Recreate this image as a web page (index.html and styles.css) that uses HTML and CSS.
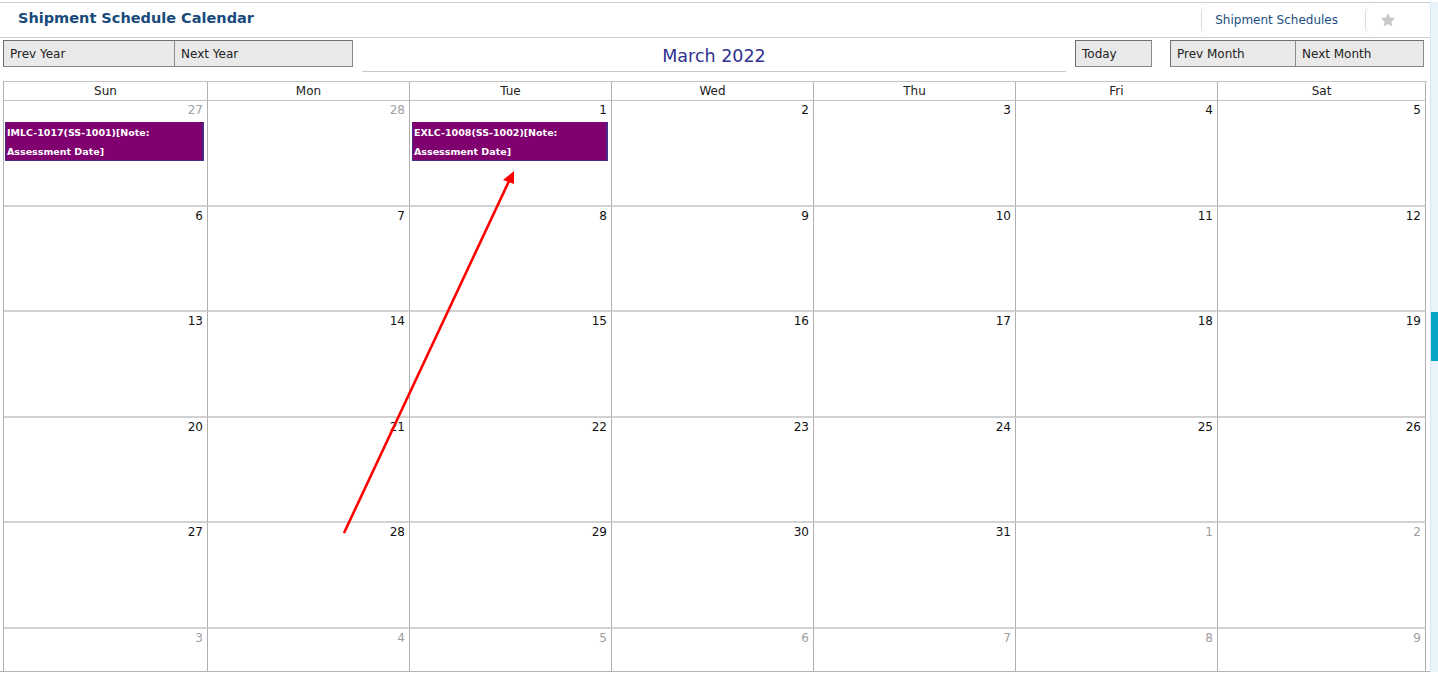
FILE: index.html
```html
<!DOCTYPE html>
<html lang="en">

<head>
    <meta charset="UTF-8">
    <title>Shipment Schedule Calendar</title>
    <link rel="stylesheet" href="styles.css">
</head>

<body>
    <div class="page">
        <div class="panel">

            <!-- Header -->
            <header class="header">
                <div class="header-title">Shipment Schedule Calendar</div>
                <div class="header-tabs">
                    <a class="tab-link">Shipment Schedules</a>
                    <span class="tab-star">
                        <svg width="18" height="18" viewBox="0 0 24 24">
                            <path d="M12 2.5l2.9 6.1 6.6.8-4.9 4.6 1.3 6.6L12 17.3l-5.9 3.3 1.3-6.6-4.9-4.6 6.6-.8z" fill="#c9c9c9"/>
                        </svg>
                    </span>
                </div>
            </header>

            <!-- Toolbar -->
            <div class="toolbar">
                <div class="btn-group">
                    <button class="cal-btn btn-prev-year">Prev Year</button>
                    <button class="cal-btn btn-next-year">Next Year</button>
                </div>
                <div class="month-title">March 2022</div>
                <button class="cal-btn btn-today">Today</button>
                <div class="btn-group group-month">
                    <button class="cal-btn btn-prev-month">Prev Month</button>
                    <button class="cal-btn btn-next-month">Next Month</button>
                </div>
            </div>

            <!-- Calendar grid -->
            <div class="calendar" id="calendar">
                <div class="dow">Sun</div>
                <div class="dow">Mon</div>
                <div class="dow">Tue</div>
                <div class="dow">Wed</div>
                <div class="dow">Thu</div>
                <div class="dow">Fri</div>
                <div class="dow">Sat</div>
            </div>

        </div>
        <div class="rail"><div class="rail-thumb"></div></div>
    </div>

    <!-- Annotation arrow -->
    <svg class="annotation" width="1438" height="685" viewBox="0 0 1438 685">
        <line x1="344" y1="533" x2="509" y2="181" stroke="#ff0000" stroke-width="2.6"/>
        <polygon points="514,171 503,180 514,184" fill="#ff0000"/>
    </svg>

    <script>
        const calendar = document.getElementById('calendar');
        const events = {
            '0-0': 'IMLC-1017(SS-1001)[Note: Assessment Date]',
            '0-2': 'EXLC-1008(SS-1002)[Note: Assessment Date]'
        };

        // March 2022 starts on a Tuesday, 6 weeks shown
        let day = 27;
        let inMonth = false;
        for (let w = 0; w < 6; w++) {
            for (let d = 0; d < 7; d++) {
                if (w === 0 && d === 2) { day = 1; inMonth = true; }
                else if (inMonth && day > 31) { day = 1; inMonth = false; }

                const cell = document.createElement('div');
                cell.className = 'day' + (inMonth ? '' : ' other-month');
                cell.innerHTML = '<div class="day-num">' + day + '</div>';

                const ev = events[w + '-' + d];
                if (ev) {
                    cell.innerHTML += '<div class="event">' + ev + '</div>';
                }
                calendar.appendChild(cell);
                day++;
            }
        }
    </script>
</body>

</html>
```

FILE: styles.css
```css
/* General */
body {
    margin: 0;
    padding-top: 2px;
    background-color: #fff;
    font-family: "DejaVu Sans", Verdana, sans-serif;
    color: #222;
    overflow: hidden;
}

.page {
    display: flex;
    height: 670px;
}

.panel {
    width: 1431px;
    height: 670px;
    box-sizing: border-box;
    border-top: 1px solid #d0d0d0;
    border-bottom: 1px solid #b4b4b4;
    overflow: hidden;
}

.rail {
    width: 7px;
    background-color: #e8f3fa;
    border-left: 1px solid #d4e6f1;
}

.rail-thumb {
    margin-top: 310px;
    height: 49px;
    background-color: #08a6c4;
}

/* Header */
.header {
    height: 34px;
    border-bottom: 1px solid #cfcfcf;
    display: flex;
    align-items: center;
    justify-content: space-between;
}

.header-title {
    padding-left: 18px;
    font-size: 14.5px;
    font-weight: bold;
    color: #184a7c;
    margin-top: -5px;
}

.header-tabs {
    display: flex;
    align-items: center;
    height: 100%;
    padding-right: 33px;
}

.tab-link {
    display: flex;
    align-items: center;
    height: 26px;
    padding: 0 27px 0 13px;
    border-left: 1px solid #dcdcdc;
    border-radius: 5px 0 0 5px;
    font-size: 12px;
    color: #1d4f80;
}

.tab-star {
    display: flex;
    align-items: center;
    height: 26px;
    padding-left: 13px;
    border-left: 1px solid #dcdcdc;
    border-radius: 5px 0 0 5px;
}

/* Toolbar */
.toolbar {
    display: flex;
    align-items: flex-start;
    margin-top: 2px;
    padding-left: 3px;
    height: 41px;
}

.btn-group {
    display: flex;
}

.cal-btn {
    height: 27px;
    padding: 0 6px;
    margin: 0;
    text-align: left;
    font-family: inherit;
    font-size: 12px;
    color: #222;
    background-color: #e9e9e9;
    border: 1px solid #8a8a8a;
    border-top-color: #6e6e6e;
    border-left-color: #6e6e6e;
}

.btn-prev-year {
    width: 172px;
}

.btn-next-year {
    width: 178px;
    border-left-width: 0;
}

.month-title {
    width: 704px;
    margin-left: 9px;
    height: 31px;
    border-bottom: 1px solid #c8c8c8;
    text-align: center;
    font-size: 17.5px;
    line-height: 32px;
    color: #30308f;
}

.btn-today {
    width: 77px;
    margin-left: 9px;
}

.group-month {
    margin-left: 18px;
}

.btn-prev-month {
    width: 126px;
}

.btn-next-month {
    width: 128px;
    border-left-width: 0;
}

/* Calendar grid */
.calendar {
    display: grid;
    grid-template-columns: 204px repeat(5, 202px) 208px;
    grid-template-rows: 19px repeat(6, 105.5px);
    width: 1423px;
    margin-left: 3px;
    border-top: 1px solid #c4c4c4;
    border-left: 1px solid #b0b0b0;
}

.dow {
    border-right: 1px solid #b0b0b0;
    border-bottom: 1px solid #c4c4c4;
    text-align: center;
    font-size: 12px;
    line-height: 18px;
    color: #222;
}

.day {
    border-right: 1px solid #b0b0b0;
    border-bottom: 2px solid #d2d2d2;
    padding: 1px 3px 0 1px;
}

.day-num {
    text-align: right;
    padding-right: 1px;
    font-size: 12px;
    line-height: 16px;
    color: #111;
}

.other-month .day-num {
    color: #a0a0a0;
}

.event {
    margin-top: 4px;
    padding: 0 1px;
    height: 37px;
    background-color: #800070;
    border: 1px solid #4a2a86;
    border-right-width: 2px;
    border-top-color: #800070;
    color: #fff;
    font-size: 9.5px;
    font-weight: bold;
    line-height: 19px;
    overflow: hidden;
}

.day:nth-child(10) .event {
    margin-left: 1px;
}

/* Annotation overlay */
.annotation {
    position: absolute;
    left: 0;
    top: 0;
    pointer-events: none;
}
```
